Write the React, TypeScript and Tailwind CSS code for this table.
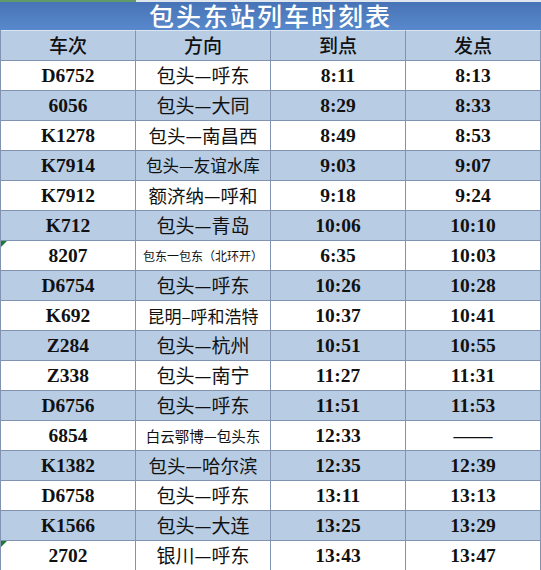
const trains = [
  { no: "D6752", dir: "包头—呼东", arr: "8:11", dep: "8:13", size: "text-[19px]" },
  { no: "6056", dir: "包头—大同", arr: "8:29", dep: "8:33", size: "text-[19px]" },
  { no: "K1278", dir: "包头—南昌西", arr: "8:49", dep: "8:53", size: "text-[18.5px]" },
  { no: "K7914", dir: "包头—友谊水库", arr: "9:03", dep: "9:07", size: "text-[16.5px]" },
  { no: "K7912", dir: "额济纳—呼和", arr: "9:18", dep: "9:24", size: "text-[18.5px]" },
  { no: "K712", dir: "包头—青岛", arr: "10:06", dep: "10:10", size: "text-[19px]" },
  { no: "8207", dir: "包东一包东（北环开）", arr: "6:35", dep: "10:03", size: "text-[12px]", mark: true },
  { no: "D6754", dir: "包头—呼东", arr: "10:26", dep: "10:28", size: "text-[19px]" },
  { no: "K692", dir: "昆明–呼和浩特", arr: "10:37", dep: "10:41", size: "text-[17px]" },
  { no: "Z284", dir: "包头—杭州", arr: "10:51", dep: "10:55", size: "text-[19px]" },
  { no: "Z338", dir: "包头—南宁", arr: "11:27", dep: "11:31", size: "text-[19px]" },
  { no: "D6756", dir: "包头—呼东", arr: "11:51", dep: "11:53", size: "text-[19px]" },
  { no: "6854", dir: "白云鄂博—包头东", arr: "12:33", dep: "——", size: "text-[14.5px]" },
  { no: "K1382", dir: "包头—哈尔滨", arr: "12:35", dep: "12:39", size: "text-[18.5px]" },
  { no: "D6758", dir: "包头—呼东", arr: "13:11", dep: "13:13", size: "text-[19px]" },
  { no: "K1566", dir: "包头—大连", arr: "13:25", dep: "13:29", size: "text-[19px]" },
  { no: "2702", dir: "银川—呼东", arr: "13:43", dep: "13:47", size: "text-[19px]", mark: true }
];

const cell = "h-[30px] flex items-center justify-center border-r border-t border-[#8193b0]";
const num = "font-['Liberation_Serif',serif] font-bold text-[19.5px] text-[#111]";
const cjk = "font-['Noto_Sans_CJK_SC',sans-serif] text-[#111]";

export default function App() {
  return (
    <div className="w-[541px] h-[570px] bg-white overflow-hidden">
      <div className="relative h-[30px] bg-gradient-to-b from-[#4672b4] to-[#5889cc] flex items-center justify-center">
        {/* thin strip along the top edge of the sheet */}
        <div className="absolute inset-x-0 top-0 flex h-[2px]">
          <div className="w-[136px] bg-[#5f9a67]" />
          <div className="flex-1 bg-[#dfe6ee]" />
        </div>
        <h1 className="font-['Noto_Sans_CJK_SC',sans-serif] font-medium text-white text-[25px] leading-[30px] tracking-[2px]">
          包头东站列车时刻表
        </h1>
      </div>
      <div className="grid grid-cols-[135px_135px_135px_135px] border-l border-[#8193b0] w-[541px]">
        {["车次", "方向", "到点", "发点"].map((h) => (
          <div key={h} className={`${cell} bg-[#b8cce4] border-t-[#dbe5f1]`}>
            <span className={`${cjk} font-medium text-[19px]`}>{h}</span>
          </div>
        ))}
        {trains.map((t, i) => {
          const bg = i % 2 === 0 ? "bg-white" : "bg-[#b8cce4]";
          return (
            <div key={t.no} className="contents">
              <div className={`${cell} ${bg} relative`}>
                {t.mark && (
                  <span className="absolute left-0 top-0 w-0 h-0 border-t-[6px] border-r-[6px] border-t-[#1f7a3a] border-r-transparent" />
                )}
                <span className={num}>{t.no}</span>
              </div>
              <div className={`${cell} ${bg}`}>
                <span className={`${cjk} ${t.size} whitespace-nowrap`}>{t.dir}</span>
              </div>
              <div className={`${cell} ${bg}`}>
                <span className={num}>{t.arr}</span>
              </div>
              <div className={`${cell} ${bg}`}>
                <span className={num}>{t.dep}</span>
              </div>
            </div>
          );
        })}
      </div>
    </div>
  );
}
